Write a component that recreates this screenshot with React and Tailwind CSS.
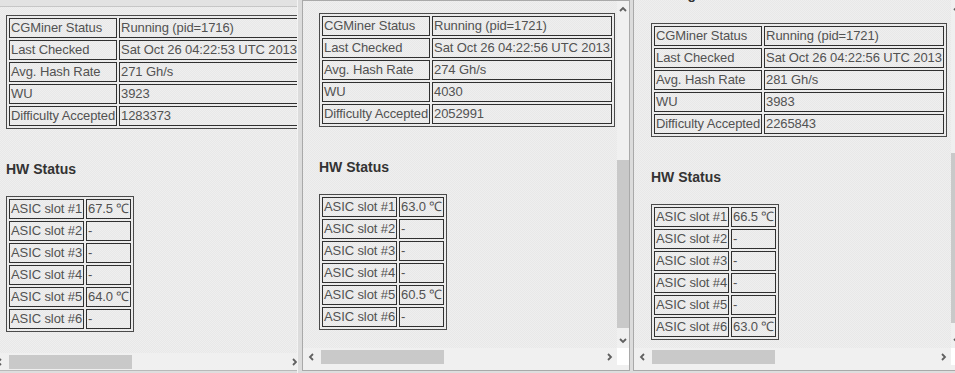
import React from 'react'

const font = { fontFamily: '"Liberation Sans", Arial, sans-serif' }

const checker =
  'bg-[repeating-conic-gradient(#efefef_0_25%,#e8e8e8_0_50%)] bg-[length:2px_2px]'

const panels = [
  {
    summary: [
      ['CGMiner Status', 'Running (pid=1716)'],
      ['Last Checked', 'Sat Oct 26 04:22:53 UTC 2013'],
      ['Avg. Hash Rate', '271 Gh/s'],
      ['WU', '3923'],
      ['Difficulty Accepted', '1283373'],
    ],
    slots: ['67.5 ℃', '-', '-', '-', '64.0 ℃', '-'],
  },
  {
    summary: [
      ['CGMiner Status', 'Running (pid=1721)'],
      ['Last Checked', 'Sat Oct 26 04:22:56 UTC 2013'],
      ['Avg. Hash Rate', '274 Gh/s'],
      ['WU', '4030'],
      ['Difficulty Accepted', '2052991'],
    ],
    slots: ['63.0 ℃', '-', '-', '-', '60.5 ℃', '-'],
  },
  {
    summary: [
      ['CGMiner Status', 'Running (pid=1721)'],
      ['Last Checked', 'Sat Oct 26 04:22:56 UTC 2013'],
      ['Avg. Hash Rate', '281 Gh/s'],
      ['WU', '3983'],
      ['Difficulty Accepted', '2265843'],
    ],
    slots: ['66.5 ℃', '-', '-', '-', '-', '63.0 ℃'],
  },
]

// little scrollbar chevron
function Arrow({ dir }) {
  const pts = {
    left: '5,1 2,4 5,7',
    right: '3,1 6,4 3,7',
    up: '1,5 4,2 7,5',
    down: '1,3 4,6 7,3',
  }[dir]
  return (
    <svg width="8" height="8" viewBox="0 0 8 8" className="block">
      <polyline points={pts} fill="none" stroke="#606060" strokeWidth="1.8" />
    </svg>
  )
}

function KeyTable({ rows }) {
  return (
    <table className="border-separate border-spacing-[2px] border border-[#4a4a4a] whitespace-nowrap text-[13px] leading-[18px] tracking-[-0.1px] text-[#525252]">
      <tbody>
        {rows.map(([k, v]) => (
          <tr key={k}>
            <td className="border border-[#303030] px-px py-0">{k}</td>
            <td className="border border-[#303030] px-px py-0">{v}</td>
          </tr>
        ))}
      </tbody>
    </table>
  )
}

function Content({ data, topHeading }) {
  return (
    <div>
      {topHeading && (
        <h3 className="-mt-[15px] mb-[20px] text-[14px] leading-[18px] font-bold text-[#333]">
          Mining Status
        </h3>
      )}
      <KeyTable rows={data.summary} />
      <h3 className="mt-[31px] mb-[18px] text-[14px] leading-[18px] font-bold text-[#333]">HW Status</h3>
      <KeyTable rows={data.slots.map((t, i) => [`ASIC slot #${i + 1}`, t])} />
    </div>
  )
}

function HScroll({ className = '' }) {
  return (
    <div className={`flex h-[17px] items-center bg-[#f0f0f0] ${className}`}>
      <div className="flex w-[17px] shrink-0 justify-center">
        <Arrow dir="left" />
      </div>
      <div className="ml-px h-[14px] w-[123px] bg-[#c9c9c9]" />
      <div className="flex-1" />
      <div className="flex w-[17px] shrink-0 justify-center">
        <Arrow dir="right" />
      </div>
    </div>
  )
}

function VScroll({ thumbTop, thumbH }) {
  return (
    <div className="flex w-[12px] shrink-0 flex-col bg-[#f0f0f0]">
      <div className="flex h-[17px] items-center justify-center">
        <Arrow dir="up" />
      </div>
      <div className="flex-1">
        <div className="w-full bg-[#c9c9c9]" style={{ marginTop: thumbTop, height: thumbH }} />
      </div>
      <div className="flex h-[17px] items-center justify-center">
        <Arrow dir="down" />
      </div>
    </div>
  )
}

export default function App() {
  return (
    <div style={font} className="flex h-[373px] w-[955px] overflow-hidden bg-[#dedede]">
      {/* left window, partly off screen */}
      <div className="flex h-[371px] w-[297px] shrink-0 flex-col overflow-hidden border-b border-[#b9b9b9]">
        <div className="h-[7px] shrink-0 border-b border-[#c6c6c6] bg-[#e2e2e2]" />
        <div className={`flex-1 overflow-hidden pl-[6px] pt-[8px] ${checker}`}>
          <Content data={panels[0]} />
        </div>
        <HScroll className="-ml-[9px] -mr-[5px]" />
      </div>

      <div className="w-[5px] shrink-0 border-l border-[#f3f3f3] bg-[#dcdcdc]" />

      {/* middle window */}
      <div className="flex h-[371px] w-[328px] shrink-0 flex-col border border-[#a9a9a9] bg-[#f0f0f0]">
        <div className="flex h-[347px] shrink-0">
          <div className={`flex-1 overflow-hidden pl-[16px] pt-[12px] ${checker}`}>
            <Content data={panels[1]} />
          </div>
          <VScroll thumbTop={142} thumbH={168} />
        </div>
        <div className="flex">
          <HScroll className="flex-1" />
          <div className="h-[17px] w-[12px] bg-white" />
        </div>
      </div>

      <div className="w-[3px] shrink-0 bg-[#dcdcdc]" />

      {/* right window, cut at the edge */}
      <div className="flex h-[371px] w-[330px] shrink-0 flex-col border-b border-l border-[#a9a9a9] bg-[#f0f0f0]">
        <div className="flex h-[348px] shrink-0">
          <div className={`flex-1 overflow-hidden pl-[17px] ${checker}`}>
            <Content data={panels[2]} topHeading />
          </div>
          <VScroll thumbTop={136} thumbH={170} />
        </div>
        <div className="flex">
          <HScroll className="flex-1" />
          <div className="h-[17px] w-[12px] bg-white" />
        </div>
      </div>
    </div>
  )
}
